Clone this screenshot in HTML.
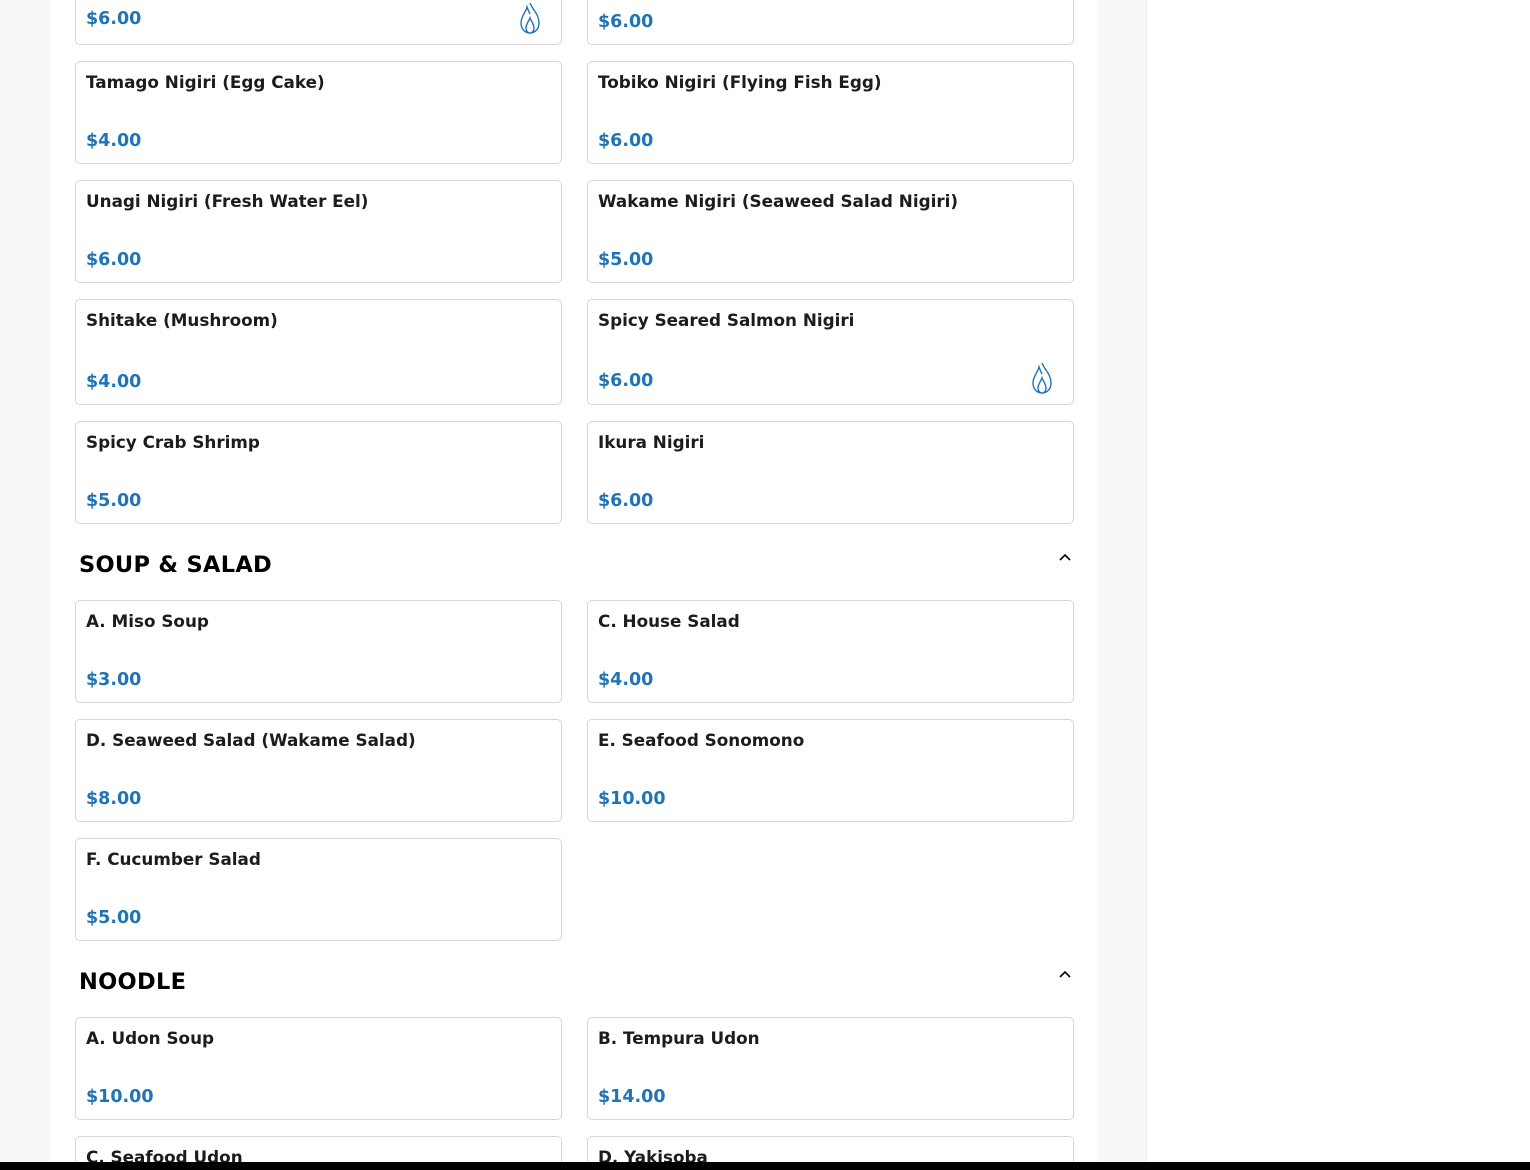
<!DOCTYPE html>
<html style="overflow:hidden"><head><meta charset="utf-8"><style>
html,body{margin:0;width:1530px;height:1170px;overflow:hidden}
body{background:#fff;font-family:"DejaVu Sans","Liberation Sans",sans-serif;position:relative}
.lg{position:absolute;left:0;top:0;width:50px;height:1170px;background:#f8f8f8}
.rg{position:absolute;left:1098px;top:0;width:48px;height:1170px;background:#f8f8f8;border-right:1px solid #eee}
.c{position:absolute;box-sizing:border-box;border:1px solid #d6d6d6;border-radius:5px;background:#fff;width:487px}
.t{position:absolute;left:10px;top:10px;font-weight:bold;font-size:16.8px;color:#1c1c1c;white-space:nowrap}
.p{position:absolute;left:10px;bottom:12px;font-weight:bold;font-size:17.5px;color:#1f73b7}
.h{position:absolute;left:79px;font-weight:bold;font-size:22.5px;color:#000;letter-spacing:.3px}
.ch{position:absolute;left:1059px;width:12px;height:8px}
.fl{position:absolute;right:19px;bottom:9px}
.bar{position:absolute;left:0;top:1162px;width:1530px;height:8px;background:#000}
</style></head><body>
<div class="lg"></div><div class="rg"></div>
<svg width="0" height="0" style="position:absolute"><defs><symbol id="f" viewBox="0 0 24 34"><path d="M12 2C14 8 21 13 21 22C21 28 17 32 12 32C7 32 3 28 3 22C3 15 8 11 9 6C10 9 11 11 12 13M12 32C9 32 8 29 8 27C8 23 11 20 12 17C13 20 16 23 16 27C16 29 15 32 12 32" fill="none" stroke="#1f73b7" stroke-width="1.4"/></symbol></defs></svg>

<div class="c" style="left:75px;top:-59px;height:104px"><div class="p" style="bottom:15px">$6.00</div><svg class="fl" width="24" height="34" style="bottom:9px"><use href="#f"/></svg></div>
<div class="c" style="left:587px;top:-59px;height:104px"><div class="p">$6.00</div></div>

<div class="c" style="left:75px;top:61px;height:103px"><div class="t">Tamago Nigiri (Egg Cake)</div><div class="p">$4.00</div></div>
<div class="c" style="left:587px;top:61px;height:103px"><div class="t">Tobiko Nigiri (Flying Fish Egg)</div><div class="p">$6.00</div></div>
<div class="c" style="left:75px;top:180px;height:103px"><div class="t">Unagi Nigiri (Fresh Water Eel)</div><div class="p">$6.00</div></div>
<div class="c" style="left:587px;top:180px;height:103px"><div class="t">Wakame Nigiri (Seaweed Salad Nigiri)</div><div class="p">$5.00</div></div>
<div class="c" style="left:75px;top:299px;height:106px"><div class="t">Shitake (Mushroom)</div><div class="p">$4.00</div></div>
<div class="c" style="left:587px;top:299px;height:106px"><div class="t">Spicy Seared Salmon Nigiri</div><div class="p" style="bottom:13px">$6.00</div><svg class="fl" width="24" height="34"><use href="#f"/></svg></div>
<div class="c" style="left:75px;top:421px;height:103px"><div class="t">Spicy Crab Shrimp</div><div class="p">$5.00</div></div>
<div class="c" style="left:587px;top:421px;height:103px"><div class="t">Ikura Nigiri</div><div class="p">$6.00</div></div>

<div class="h" style="top:552px">SOUP &amp; SALAD</div>
<svg class="ch" style="top:553px" viewBox="0 0 12 8"><path d="M1 7L6 2L11 7" fill="none" stroke="#000" stroke-width="1.6"/></svg>

<div class="c" style="left:75px;top:600px;height:103px"><div class="t">A. Miso Soup</div><div class="p">$3.00</div></div>
<div class="c" style="left:587px;top:600px;height:103px"><div class="t">C. House Salad</div><div class="p">$4.00</div></div>
<div class="c" style="left:75px;top:719px;height:103px"><div class="t">D. Seaweed Salad (Wakame Salad)</div><div class="p">$8.00</div></div>
<div class="c" style="left:587px;top:719px;height:103px"><div class="t">E. Seafood Sonomono</div><div class="p">$10.00</div></div>
<div class="c" style="left:75px;top:838px;height:103px"><div class="t">F. Cucumber Salad</div><div class="p">$5.00</div></div>

<div class="h" style="top:969px">NOODLE</div>
<svg class="ch" style="top:970px" viewBox="0 0 12 8"><path d="M1 7L6 2L11 7" fill="none" stroke="#000" stroke-width="1.6"/></svg>

<div class="c" style="left:75px;top:1017px;height:103px"><div class="t">A. Udon Soup</div><div class="p">$10.00</div></div>
<div class="c" style="left:587px;top:1017px;height:103px"><div class="t">B. Tempura Udon</div><div class="p">$14.00</div></div>
<div class="c" style="left:75px;top:1136px;height:34px;border-bottom:none;border-radius:5px 5px 0 0"><div class="t">C. Seafood Udon</div></div>
<div class="c" style="left:587px;top:1136px;height:34px;border-bottom:none;border-radius:5px 5px 0 0"><div class="t">D. Yakisoba</div></div>
<div class="bar"></div>
</body></html>
